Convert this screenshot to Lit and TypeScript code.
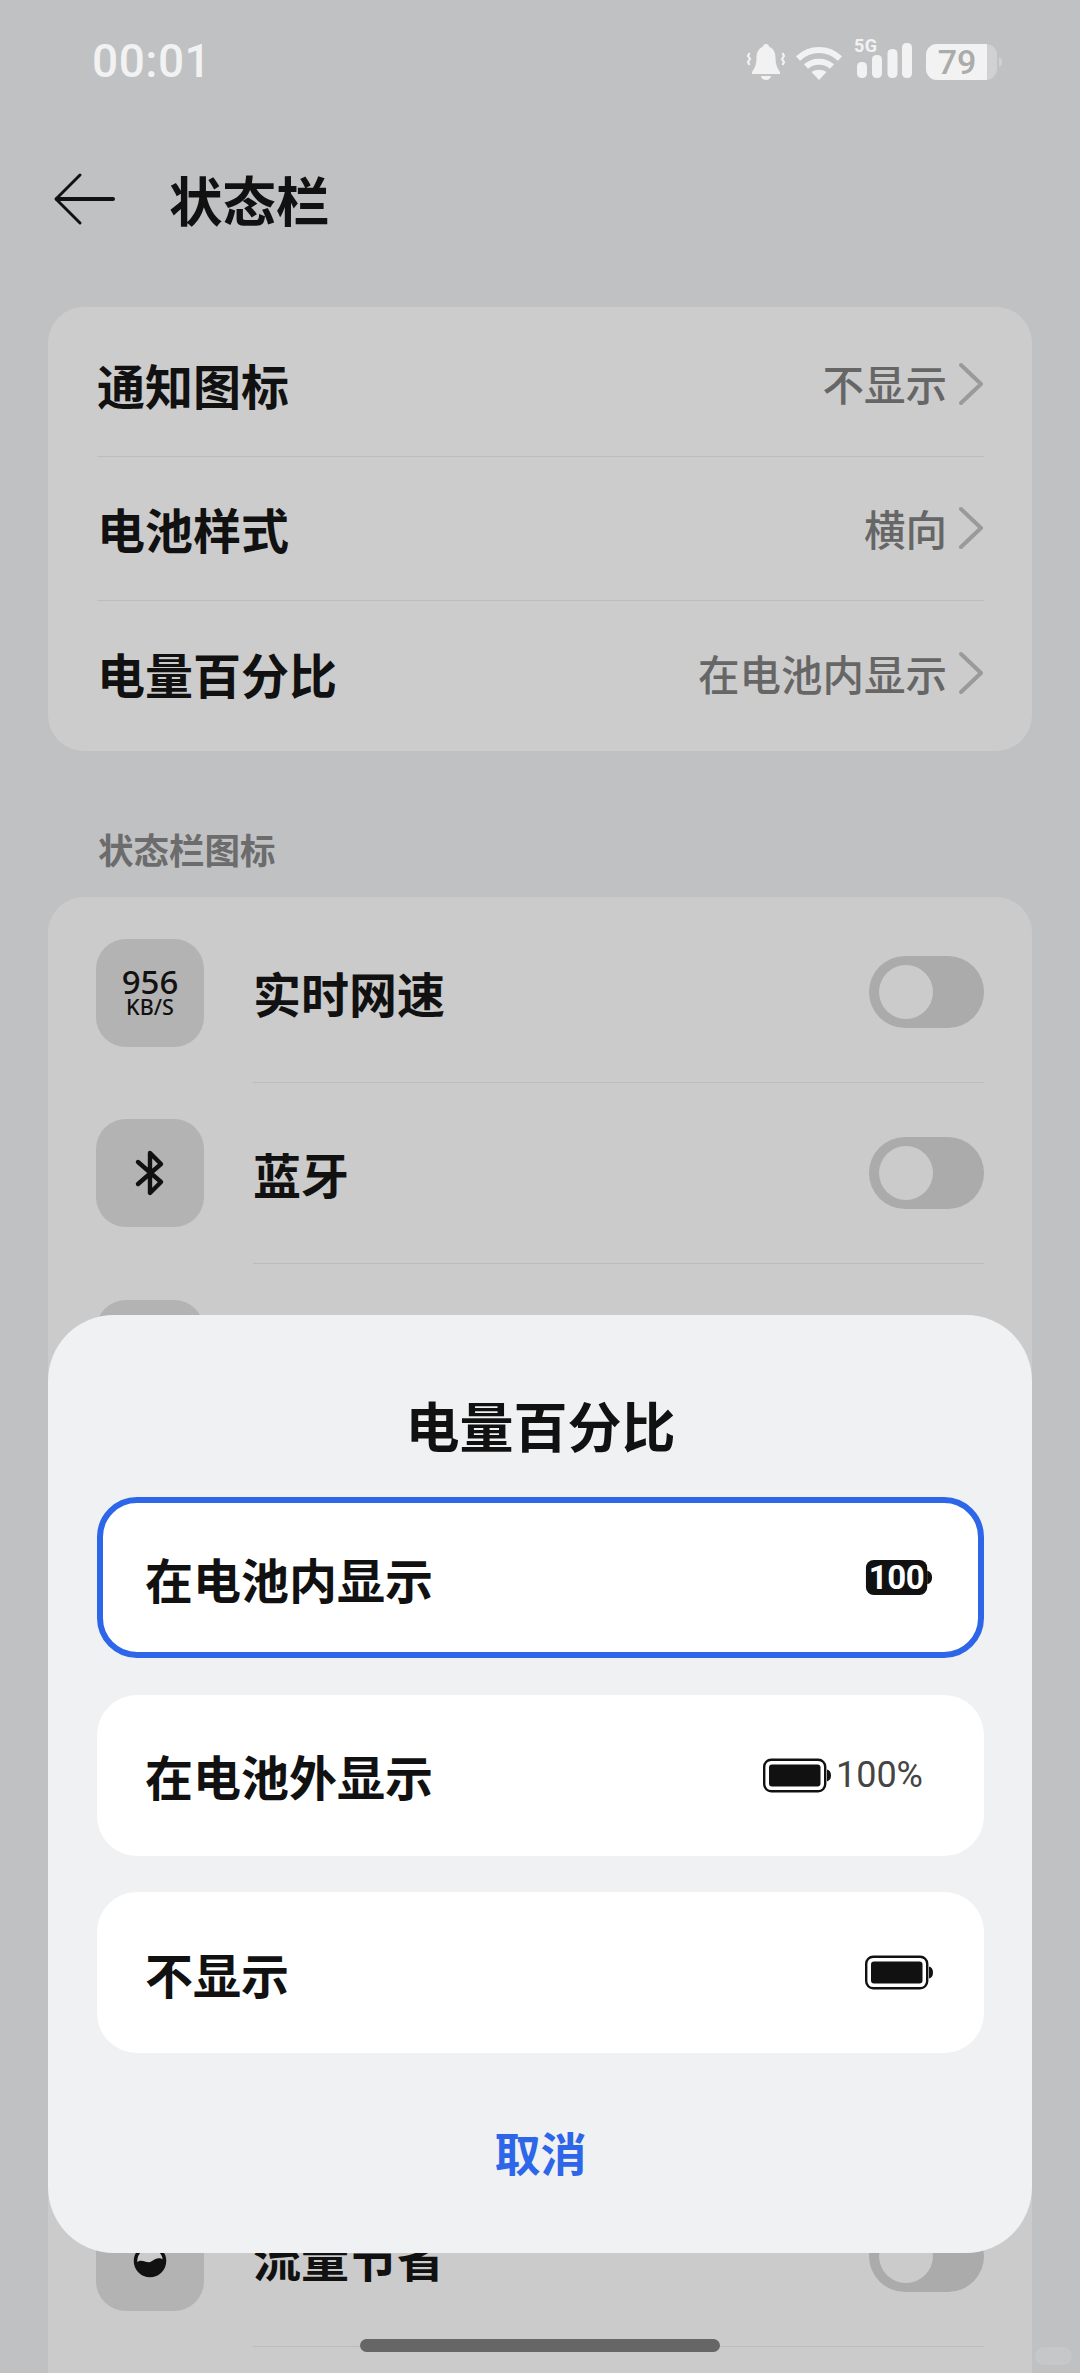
import { LitElement, html, css } from "lit";
import { customElement } from "lit/decorators.js";

const chevron = html`<svg class="chev" viewBox="0 0 26 44" fill="none"><path d="M3 3 L23 22 L3 41" stroke="#9a9a9a" stroke-width="4" stroke-linecap="round" stroke-linejoin="round"/></svg>`;

const batteryOutline = html`<svg class="batt" viewBox="0 0 68 34"><rect x="1.2" y="1.2" width="61" height="31.6" rx="7" fill="none" stroke="#111" stroke-width="2.4"/><rect x="6" y="6" width="51.500" height="22" rx="3" fill="#111"/><path d="M64 11 q4 1 4 6 t-4 6 z" fill="#111"/></svg>`;

const batteryText = html`<svg class="batt" viewBox="0 0 68 36"><rect x="0" y="0" width="63" height="36" rx="8" fill="#111"/><path d="M63 11 q5 1 5 7 t-5 7 z" fill="#111"/><text x="31.5" y="30" text-anchor="middle" class="batt-num">100</text></svg>`;

const hiddenRow = { label: "", icon: null as unknown };

const rows = [
  { label: "实时网速", icon: html`<div class="speed"><span class="s1">956</span><span class="s2">KB/S</span></div>` },
  { label: "蓝牙", icon: html`<svg class="bt" viewBox="0 0 28 48" fill="none"><path d="M2 13 L25 33 L14 44 L14 4 L25 15 L2 35" stroke="#111" stroke-width="4.4" stroke-linejoin="round" stroke-linecap="round"/></svg>` },
  hiddenRow, hiddenRow, hiddenRow, hiddenRow, hiddenRow,
  { label: "流量节省", icon: html`<svg class="drop" viewBox="0 0 40 40"><circle cx="20" cy="24" r="14.5" fill="#cbcbcb" stroke="#111" stroke-width="3.5"/><path d="M6 26 C12 20 17 28 22 24 C26 21 30 20 34 23 C34 32 28 38 20 38 C12 38 6 32 6 26 Z" fill="#111"/></svg>` },
];

@customElement("app-root")
export class AppRoot extends LitElement {
  static styles = css`
    :host {
      display: block;
      width: 1080px;
      height: 2373px;
      position: relative;
      overflow: hidden;
      background: #c0c1c3;
      color: #111;
      font-family: "Noto Sans CJK SC", "Noto Sans", sans-serif;
    }
    svg { overflow: visible; }
    .status {
      height: 122px;
      display: flex;
      align-items: center;
      justify-content: space-between;
      padding: 0 77px 0 92px;
      color: #f2f2f2;
    }
    .time { font: 500 46px/1 Roboto, sans-serif; letter-spacing: 0.5px; }
    .icons { display: flex; align-items: flex-start; height: 40px; margin-top: 3px; }
    .bell { width: 38px; height: 36px; margin-top: 1px; }
    .wifi { width: 48px; height: 34px; margin: 3px 0 0 10px; }
    .signal { width: 56px; height: 39px; margin: -2px 0 0 13px; }
    .bat79 { width: 77px; height: 36px; margin: 1px 0 0 14px; }
    .sig-text { font: 700 18px Roboto, sans-serif; fill: #f2f2f2; letter-spacing: 0.5px; }
    .bat-text { font: 500 34px Roboto, sans-serif; fill: #ababab; }

    .header { height: 154px; display: flex; align-items: center; padding-left: 53px; gap: 54px; }
    .back { width: 62px; height: 52px; }
    .title { font-size: 53.5px; font-weight: 700; line-height: 1; }

    .card { margin: 0 48px; background: #cccccc; border-radius: 36px; }
    .top-card { margin-top: 31px; padding: 5px 48px 5px 49px; }
    .nav-row { height: 144.5px; display: flex; align-items: center; border-bottom: 1px solid #bdbdbd; box-sizing: border-box; }
    .nav-row:last-child { border-bottom: none; }
    .nav-label { flex: 1; font-size: 48px; font-weight: 700; line-height: 1; }
    .nav-value { font-size: 41.5px; font-weight: 500; color: #666; line-height: 1; margin-right: 11px; }
    .chev { width: 26px; height: 44px; }

    .section { padding: 74px 0 24px 98px; font-size: 35.5px; line-height: 48px; font-weight: 700; color: #6c6c6c; }

    .list { padding-top: 6px; padding-left: 48px; padding-right: 48px; height: 1600px; background: #cbcbcb; }
    .row { height: 180.6px; display: flex; align-items: center; box-sizing: border-box; }
    .tile {
      width: 108px; height: 108px; border-radius: 30px; background: #b3b3b3;
      display: flex; align-items: center; justify-content: center; flex: none;
    }
    .row-main {
      flex: 1; align-self: stretch; margin-left: 49px; display: flex; align-items: center;
      justify-content: space-between; border-bottom: 1px solid #bcbcbc; box-sizing: border-box;
    }
    .row-label { font-size: 48px; font-weight: 700; line-height: 1; }
    .toggle { width: 115px; height: 72px; border-radius: 36px; background: #ababab; padding: 9px 10px; box-sizing: border-box; }
    .knob { width: 54px; height: 54px; border-radius: 50%; background: #cbcbcb; }
    .speed { display: flex; flex-direction: column; align-items: center; font-family: "Noto Sans", sans-serif; font-weight: 500; color: #111; }
    .s1 { font-size: 33px; line-height: 28px; }
    .s2 { font-size: 21.5px; line-height: 21px; }
    .bt { width: 28px; height: 48px; }
    .drop { width: 40px; height: 40px; }

    .dialog {
      position: absolute; left: 48px; top: 1315px; width: 984px; height: 938px;
      box-sizing: border-box; background: #eff1f3; border-radius: 66px;
      padding: 74px 48px 0 49px; display: flex; flex-direction: column;
    }
    .d-title { height: 72px; line-height: 72px; text-align: center; font-size: 54px; font-weight: 700; margin-bottom: 36px; }
    .options { display: flex; flex-direction: column; gap: 36.5px; }
    .opt {
      height: 161px; box-sizing: border-box; background: #fff; border-radius: 40px;
      display: flex; align-items: center; justify-content: space-between; padding: 0 51px 0 48px;
      font-size: 48px; font-weight: 700;
    }
    .opt.sel { border: 6px solid #2d66e8; padding: 0 45px 0 42px; }
    .batt { width: 68px; height: 35px; display: block; }
    .batt-num { font: 700 34px Roboto, sans-serif; fill: #fff; letter-spacing: -0.5px; }
    .pair { display: flex; align-items: center; gap: 5px; margin-right: 10px; }
    .pct { font: 400 36px/1 Roboto, sans-serif; color: #444; }
    .cancel { flex: 1; display: flex; align-items: center; justify-content: center; color: #2d66e8; font-size: 46px; font-weight: 700; padding-bottom: 5px; }

    .home { position: absolute; left: 360px; top: 2339px; width: 360px; height: 13px; border-radius: 7px; background: #666; }
    .mark { position: absolute; left: 1035px; top: 2347px; width: 37px; height: 18px; border-radius: 9px; background: rgba(255,255,255,0.1); }
  `;

  render() {
    return html`
      <div class="status">
        <span class="time">00:01</span>
        <div class="icons">
          <svg class="bell" viewBox="0 0 38 36" fill="#f2f2f2">
            <path d="M19 0 C21 0 22 1.5 22.5 3 C27 5 28.5 9 28.5 14 C28.5 20 30 24 33 28 L33 30 L5 30 L5 28 C8 24 9.5 20 9.5 14 C9.5 9 11 5 15.5 3 C16 1.5 17 0 19 0 Z"/>
            <path d="M14 32 L24 32 C23.5 34.8 21.5 36 19 36 C16.5 36 14.5 34.8 14 32 Z"/>
            <path d="M2.5 9 l-1.5 3 l2 3 l-2 3 l1.5 3 M35.5 9 l1.5 3 l-2 3 l2 3 l-1.5 3" fill="none" stroke="#f2f2f2" stroke-width="2.2"/>
          </svg>
          <svg class="wifi" viewBox="0 0 48 34" fill="none" stroke="#f2f2f2" stroke-width="6">
            <path d="M3 12.5 C15 1 33 1 45 12.5"/>
            <path d="M11 20.5 C18 14 30 14 37 20.5"/>
            <path d="M16.5 26 C21 23 27 23 31.500 26 L24 34 Z" fill="#f2f2f2" stroke="none"/>
          </svg>
          <svg class="signal" viewBox="0 0 56 39" fill="#f2f2f2">
            <text x="-2" y="11" class="sig-text">5G</text>
            <rect x="1" y="21" width="10" height="16" rx="4.5"/>
            <rect x="16" y="14" width="10" height="23" rx="4.500"/>
            <rect x="31.500" y="8" width="10" height="29" rx="4.500"/>
            <rect x="46" y="2" width="10" height="35" rx="4.500"/>
          </svg>
          <svg class="bat79" viewBox="0 0 77 36">
            <rect x="0" y="0" width="71" height="36" rx="11" fill="#d0d1d2"/>
            <path d="M11 0 H61 V36 H11 A11 11 0 0 1 0 25 V11 A11 11 0 0 1 11 0 Z" fill="#f2f2f2"/>
            <path d="M73 13 q3 1 3 5 t-3 5 z" fill="#d0d1d2"/>
            <text x="31" y="30" text-anchor="middle" class="bat-text">79</text>
          </svg>
        </div>
      </div>

      <div class="header">
        <svg class="back" viewBox="0 0 62 52" fill="none" stroke="#111" stroke-linecap="round" stroke-linejoin="round">
          <path d="M27 2 L3 26 L27 50" stroke-width="3"/>
          <path d="M4 26 H60" stroke-width="4"/>
        </svg>
        <span class="title">状态栏</span>
      </div>

      <div class="card top-card">
        ${[
          ["通知图标", "不显示"],
          ["电池样式", "横向"],
          ["电量百分比", "在电池内显示"],
        ].map(
          ([l, v]) => html`<div class="nav-row"><span class="nav-label">${l}</span><span class="nav-value">${v}</span>${chevron}</div>`
        )}
      </div>

      <div class="section">状态栏图标</div>

      <div class="card list">
        ${rows.map(
          (r) => html`<div class="row">
            <div class="tile">${r.icon}</div>
            <div class="row-main">
              <span class="row-label">${r.label}</span>
              <div class="toggle"><div class="knob"></div></div>
            </div>
          </div>`
        )}
      </div>

      <div class="dialog">
        <div class="d-title">电量百分比</div>
        <div class="options">
          <div class="opt sel"><span>在电池内显示</span>${batteryText}</div>
          <div class="opt"><span>在电池外显示</span><div class="pair">${batteryOutline}<span class="pct">100%</span></div></div>
          <div class="opt"><span>不显示</span>${batteryOutline}</div>
        </div>
        <div class="cancel">取消</div>
      </div>

      <div class="home"></div>
      <div class="mark"></div>
    `;
  }
}
